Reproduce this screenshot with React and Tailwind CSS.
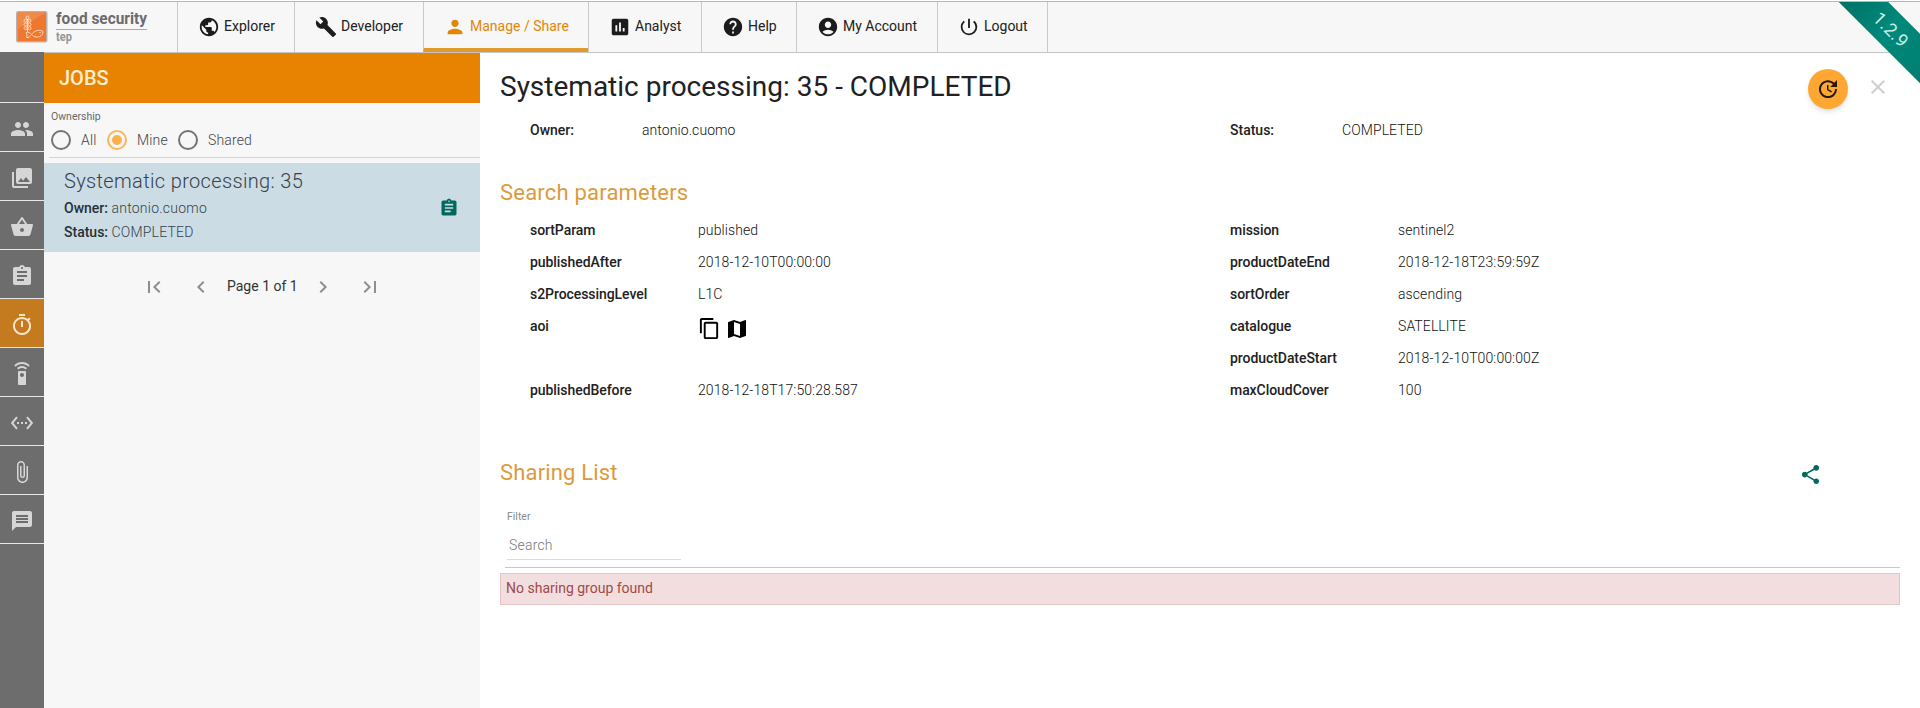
import React from "react";
import {
  MdPublic, MdBuild, MdPerson, MdAssessment, MdHelp, MdAccountCircle, MdPowerSettingsNew,
  MdPeople, MdPhotoLibrary, MdShoppingBasket, MdAssignment, MdOutlineTimer, MdSettingsRemote,
  MdSettingsEthernet, MdAttachFile, MdMessage, MdFirstPage, MdChevronLeft, MdChevronRight,
  MdLastPage, MdContentCopy, MdMap, MdShare, MdUpdate, MdClose,
} from "react-icons/md";

const NAV = [
  { label: "Explorer", Icon: MdPublic, box: "w-[117px] pl-[20px]" },
  { label: "Developer", Icon: MdBuild, box: "w-[129px] pl-[20px]" },
  { label: "Manage / Share", Icon: MdPerson, box: "w-[165px] pl-[20px]", active: true },
  { label: "Analyst", Icon: MdAssessment, box: "w-[113px] pl-[20px]" },
  { label: "Help", Icon: MdHelp, box: "w-[95px] pl-[20px]" },
  { label: "My Account", Icon: MdAccountCircle, box: "w-[141px] pl-[20px]" },
  { label: "Logout", Icon: MdPowerSettingsNew, box: "w-[110px] pl-[20px]" },
];

const SIDE = [
  MdPeople, MdPhotoLibrary, MdShoppingBasket, MdAssignment, MdOutlineTimer,
  MdSettingsRemote, MdSettingsEthernet, MdAttachFile, MdMessage,
];

const LEFT = [
  ["sortParam", "published"],
  ["publishedAfter", "2018-12-10T00:00:00"],
  ["s2ProcessingLevel", "L1C"],
  ["aoi", null],
  ["publishedBefore", "2018-12-18T17:50:28.587"],
];
const RIGHT = [
  ["mission", "sentinel2"],
  ["productDateEnd", "2018-12-18T23:59:59Z"],
  ["sortOrder", "ascending"],
  ["catalogue", "SATELLITE"],
  ["productDateStart", "2018-12-10T00:00:00Z"],
  ["maxCloudCover", "100"],
];

function Logo() {
  return (
    <svg className="ml-[16px] mt-[3px] h-[42px] w-[140px]" viewBox="0 -6 140 42">
      <rect x="0.75" y="0.75" width="30" height="30" rx="1.5" fill="#ee7830" stroke="#bdb0aa" strokeWidth="1.5" />
      <path d="M1.5 1.5H30L1.5 18Z" fill="#f08a47" />
      <g fill="none" stroke="#fde0cb" strokeWidth="0.9">
        <circle cx="11.500" cy="6.500" r="1.500" />
        <circle cx="9.500" cy="9.800" r="1.500" /><circle cx="13.500" cy="9.800" r="1.500" />
        <circle cx="9.500" cy="13.500" r="1.500" /><circle cx="13.500" cy="13.500" r="1.500" />
        <circle cx="9.500" cy="17.200" r="1.500" /><circle cx="13.500" cy="17.200" r="1.500" />
        <path d="M11.500 8v13" />
        <path d="M10 21.500c2.200-1 4 .2 5.500 2 2.500-4 8.500-5.500 11.500-3 .5 4-6 8.500-11.500 3-1 2-3 3.500-5 3 .8-1.500.8-3.500-.5-5Z" />
      </g>
      <circle cx="24" cy="21.500" r="0.700" fill="#fde0cb" />
      <text x="40" y="12.500" textLength="91" lengthAdjust="spacingAndGlyphs" fill="#6c6c6c" fontFamily="Roboto, sans-serif" fontWeight="700" fontSize="16">food security</text>
      <rect x="40" y="18" width="91" height="1" fill="#f0955a" />
      <text x="40" y="29.500" textLength="16" lengthAdjust="spacingAndGlyphs" fill="#969696" fontFamily="Roboto, sans-serif" fontWeight="700" fontSize="13">tep</text>
    </svg>
  );
}

function Radio({ on }) {
  return (
    <span className={`flex size-5 items-center justify-center rounded-full border-2 ${on ? "border-[#fbb55a]" : "border-[#747474]"}`}>
      {on && <span className="size-[10px] rounded-full bg-[#ffb04a]" />}
    </span>
  );
}

function Params({ rows, className }) {
  return (
    <dl className={className}>
      {rows.map(([k, v]) => (
        <div key={k} className={`flex leading-[33px] ${v === null ? "h-16" : "h-8"}`}>
          <dt className="w-[168px] font-medium tracking-[-0.06px]">{k}</dt>
          <dd className="font-light tracking-[0.1px] text-[#111]">
            {v === null ? (
              <span className="flex gap-[4px] pt-[7px]">
                <MdContentCopy className="size-[23px] text-black" />
                <MdMap className="size-[24px] text-black" />
              </span>
            ) : v}
          </dd>
        </div>
      ))}
    </dl>
  );
}

export default function App() {
  return (
    <div className="relative flex h-[708px] w-[1920px] flex-col overflow-hidden bg-white pt-px font-['Roboto',sans-serif] text-[14px] text-[#212121]">
      <header className="flex h-[52px] shrink-0 border-t border-[#b4b8b6] bg-[#f7f7f7]">
        <div className="w-[177px] border-b border-[#c4c4c4]"><Logo /></div>
        <nav className="flex flex-1 border-b border-[#c4c4c4]">
          {NAV.map(({ label, Icon, box, active }) => (
            <div
              key={label}
              className={`flex h-full items-center border-l border-[#cacaca] ${box} ${active ? "border-b-4 border-b-[#e39a2d] pt-[3px] text-[#e38606]" : "pb-px"}`}
            >
              <Icon className={`size-[22px] shrink-0 ${active ? "" : "text-[#1c1c1c]"}`} />
              <span className="ml-[4px] whitespace-nowrap">{label}</span>
            </div>
          ))}
          <div className="border-l border-[#cacaca]" />
        </nav>
      </header>

      <div className="flex min-h-0 flex-1">
        <aside className="-mt-px flex w-[44px] shrink-0 flex-col bg-[#6d6d6d]">
          <div className="h-[51px] shrink-0 border-b border-[#e8e8e8]" />
          {SIDE.map((Icon, i) => (
            <div
              key={i}
              className={`flex h-[49px] shrink-0 items-center justify-center border-b border-[#e8e8e8] pt-[3px] ${i === 4 ? "bg-[#c47b20] text-[#fbe6c8]" : "text-[#d6d6d6]"}`}
            >
              <Icon className="size-6" />
            </div>
          ))}
        </aside>

        <section className="flex w-[436px] shrink-0 flex-col bg-[#f7f7f7]">
          <h1 className="flex h-[50px] items-center bg-[#e78300] pl-[15px] text-[20px] font-medium text-[#ffedd2]">JOBS</h1>
          <div className="ml-[5px] h-[55px] border-b border-[#d4d4d4] pl-[2px] text-[#6a6a6a]">
            <div className="pt-[7px] text-[10.5px] leading-[14px]">Ownership</div>
            <div className="flex items-center pt-[6px] leading-5">
              <Radio /><span className="ml-[10px] w-[26px] font-light tracking-[0.14px] text-[#444]">All</span>
              <Radio on /><span className="ml-[10px] w-[41px] font-light tracking-[0.14px] text-[#444]">Mine</span>
              <Radio /><span className="ml-[10px] font-light tracking-[0.14px] text-[#444]">Shared</span>
            </div>
          </div>
          <div className="mt-[5px] flex h-[89px] items-center justify-between bg-[#ccdce5] pl-[20px] pr-[21px]">
            <div className="-mt-[5px] text-[#36424a]">
              <div className="text-[20px] font-light leading-[30px] tracking-[0.35px]">Systematic processing: 35</div>
              <div className="leading-6"><b className="font-medium text-[#263038]">Owner:</b> <span className="font-light tracking-[0.24px]">antonio.cuomo</span></div>
              <div className="leading-6"><b className="font-medium text-[#263038]">Status:</b> <span className="font-light tracking-[0.2px]">COMPLETED</span></div>
            </div>
            <MdAssignment className="size-5 text-[#00695c]" />
          </div>
          <div className="mt-[21px] flex h-[26px] items-center pl-[98px] text-[#8e8e8e]">
            <MdFirstPage className="mt-[2px] size-6" />
            <MdChevronLeft className="ml-[23px] mt-[2px] size-6" />
            <span className="ml-[14px] w-[72px] whitespace-nowrap text-[14px] text-[#333]">Page 1 of 1</span>
            <MdChevronRight className="ml-[12px] mt-[2px] size-6" />
            <MdLastPage className="ml-[23px] mt-[2px] size-6" />
          </div>
        </section>

        <main className="flex flex-1 flex-col px-5">
          <div className="flex h-[61px] items-start justify-between">
            <h2 className="pt-[16px] text-[28px] leading-[36px]">Systematic processing: 35 - COMPLETED</h2>
            <div className="flex items-center gap-[18px] pt-[16px]">
              <button className="flex size-10 items-center justify-center rounded-full bg-[#ffa733] text-[#241a08] shadow-md"><MdUpdate className="size-6" /></button>
              <MdClose className="-mt-[4px] mr-[10px] size-6 text-[#cfcfcf]" />
            </div>
          </div>
          <div className="flex pl-[30px] leading-[32px]">
            <div className="flex w-[700px]"><b className="w-[112px] font-medium">Owner:</b><span className="font-light tracking-[0.08px] text-[#111]">antonio.cuomo</span></div>
            <div className="flex"><b className="w-[112px] font-medium">Status:</b><span className="font-light tracking-[0.08px] text-[#111]">COMPLETED</span></div>
          </div>
          <h3 className="mt-[31px] text-[22px] leading-[32px] tracking-[0.2px] text-[#dc9a3c]">Search parameters</h3>
          <div className="mt-[5px] flex pl-[30px]">
            <Params rows={LEFT} className="w-[700px]" />
            <Params rows={RIGHT} />
          </div>
          <div className="mt-[51px] flex h-[32px] items-center justify-between">
            <h3 className="text-[22px] leading-[32px] tracking-[0.16px] text-[#dc9a3c]">Sharing List</h3>
            <MdShare className="mr-[78px] mt-[3px] size-[23px] text-[#00695c]" />
          </div>
          <div className="ml-[5px] mt-[20px] h-[59px] border-b border-[#c8c8c8] pl-[2px]">
            <div className="pt-px text-[10.5px] leading-[14px] text-[#8a8a8a]">Filter</div>
            <div className="h-[36px] w-[174px] border-b border-[#dcdcdc] pl-[2px] pt-[9px] font-light leading-[24px] tracking-[0.2px] text-[#777]">Search</div>
          </div>
          <div className="mt-[5px] h-[32px] border border-[#e4c6c9] bg-[#f2dede] pl-[5px] leading-[29px] text-[#a0494a]">No sharing group found</div>
        </main>
      </div>

      <div className="absolute right-0 top-[2px] h-[84px] w-[84px] overflow-hidden">
        <div className="absolute left-[-25px] top-[10px] flex h-[35px] w-[160px] rotate-45 items-center justify-center bg-linear-to-r from-[#00695c] via-[#00897b] to-[#00796b] text-[18px] tracking-[0.3px] text-[#c8efe6]">1.2.9</div>
      </div>
    </div>
  );
}
